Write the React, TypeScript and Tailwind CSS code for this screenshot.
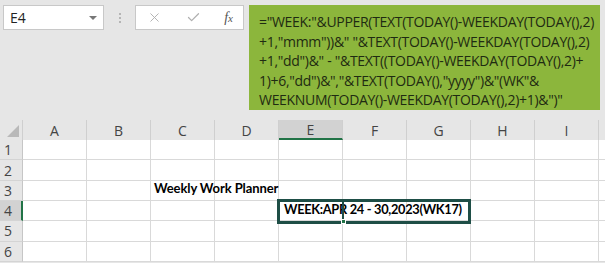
import { X, Check } from "lucide-react";

const cols = ["A", "B", "C", "D", "E", "F", "G", "H", "I"];
const rows = [1, 2, 3, 4, 5, 6];

const formula = [
  '="WEEK:"&UPPER(TEXT(TODAY()-WEEKDAY(TODAY(),2)',
  '+1,"mmm"))&" "&TEXT(TODAY()-WEEKDAY(TODAY(),2)',
  '+1,"dd")&" - "&TEXT((TODAY()-WEEKDAY(TODAY(),2)+',
  '1)+6,"dd")&","&TEXT(TODAY(),"yyyy")&"(WK"&',
  'WEEKNUM(TODAY()-WEEKDAY(TODAY(),2)+1)&")"',
];

const ui = "font-['Open_Sans','Noto_Sans',sans-serif]";
const cell = "font-['Lato','Liberation_Sans',sans-serif]";

export default function App() {
  return (
    <div className={`relative w-[605px] h-[263px] overflow-hidden bg-[#e6e6e6] ${ui}`}>
      {/* formula bar */}
      <div className="flex items-start pt-[5px] pl-[3px] h-[120px]">
        <div className="w-[101px] h-[25px] bg-white border border-[#c8c8c8] flex items-center justify-between pl-[6px] pr-[6px]">
          <span className="text-[14px] text-[#222] leading-none">E4</span>
          <span className="w-0 h-0 border-l-[4px] border-r-[4px] border-t-[4px] border-l-transparent border-r-transparent border-t-[#777]" />
        </div>
        <div className="w-[31px] h-[25px] flex flex-col items-center justify-center gap-[2px]">
          <span className="w-[2px] h-[2px] bg-[#b5b5b5]" />
          <span className="w-[2px] h-[2px] bg-[#b5b5b5]" />
          <span className="w-[2px] h-[2px] bg-[#b5b5b5]" />
        </div>
        <div className="w-[109px] h-[25px] bg-white border border-[#c8c8c8] flex items-center justify-between pl-[11px] pr-[10px]">
          <X className="w-[15px] h-[15px] text-[#b0b0b0]" strokeWidth={1.5} />
          <Check className="w-[15px] h-[15px] text-[#b0b0b0]" strokeWidth={2} />
          <span className="font-['Liberation_Serif',serif] italic text-[14px] text-[#555] leading-none">
            f<span className="text-[11px]">x</span>
          </span>
        </div>
        <div className="ml-[5px] w-[351px] h-[105px] bg-[#8cb63c] pl-[10px] pt-[7px]">
          {formula.map((line, i) => (
            <div key={i} className="whitespace-pre text-[14px] tracking-[-0.3px] leading-[19.6px] text-[#1f2b12]">
              {line}
            </div>
          ))}
        </div>
      </div>

      {/* column headers */}
      <div className="flex h-[20px]">
        <div className="w-[23px] h-full relative border-r border-[#cfcfcf]">
          <span className="absolute right-[3px] bottom-[3px] w-0 h-0 border-solid border-b-[12px] border-l-[12px] border-b-[#b9b9b9] border-l-transparent" />
        </div>
        {cols.map((c) => (
          <div
            key={c}
            className={`w-[64px] h-full flex items-center justify-center text-[14px] text-[#444] border-r border-[#cfcfcf] ${
              c === "E" ? "bg-[#d2d2d2] border-b-2 border-b-[#217346]" : ""
            }`}
          >
            {c}
          </div>
        ))}
      </div>

      {/* grid */}
      {rows.map((r) => (
        <div key={r} className="flex h-[20.33px]">
          <div
            className={`w-[23px] h-full flex items-center pl-[4px] text-[14px] text-[#444] border-b border-[#d4d4d4] ${
              r === 4 ? "bg-[#d2d2d2] border-r-2 border-r-[#217346]" : "border-r border-r-[#c6c6c6]"
            }`}
          >
            {r}
          </div>
          {cols.map((c) => (
            <div key={c} className="w-[64px] h-full bg-white border-r border-b border-[#d9d9d9] relative">
              {r === 3 && c === "C" && (
                <span className={`absolute z-10 left-[3px] bottom-[1px] whitespace-nowrap font-bold text-[13px] tracking-[-0.1px] text-black ${cell}`}>
                  Weekly Work Planner
                </span>
              )}
              {r === 4 && c === "E" && (
                <span className={`absolute z-10 left-[5px] bottom-[1px] whitespace-nowrap font-bold text-[12.8px] tracking-[-0.3px] text-black ${cell}`}>
                  WEEK:APR 24 - 30,2023(WK17)
                </span>
              )}
            </div>
          ))}
          <div className="flex-1 h-full bg-white border-b border-[#d9d9d9]" />
        </div>
      ))}

      {/* selection */}
      <div className="absolute z-20 left-[277px] top-[199px] w-[194px] h-[25px] border-[3px] border-[#1e4e46]" />
      <div className="absolute z-20 left-[342px] top-[201px] w-[2px] h-[21px] bg-[#1e4e46]" />
      <div className="absolute z-20 left-[341px] top-[219px] w-[5px] h-[5px] bg-[#217346] border border-white" />
    </div>
  );
}
